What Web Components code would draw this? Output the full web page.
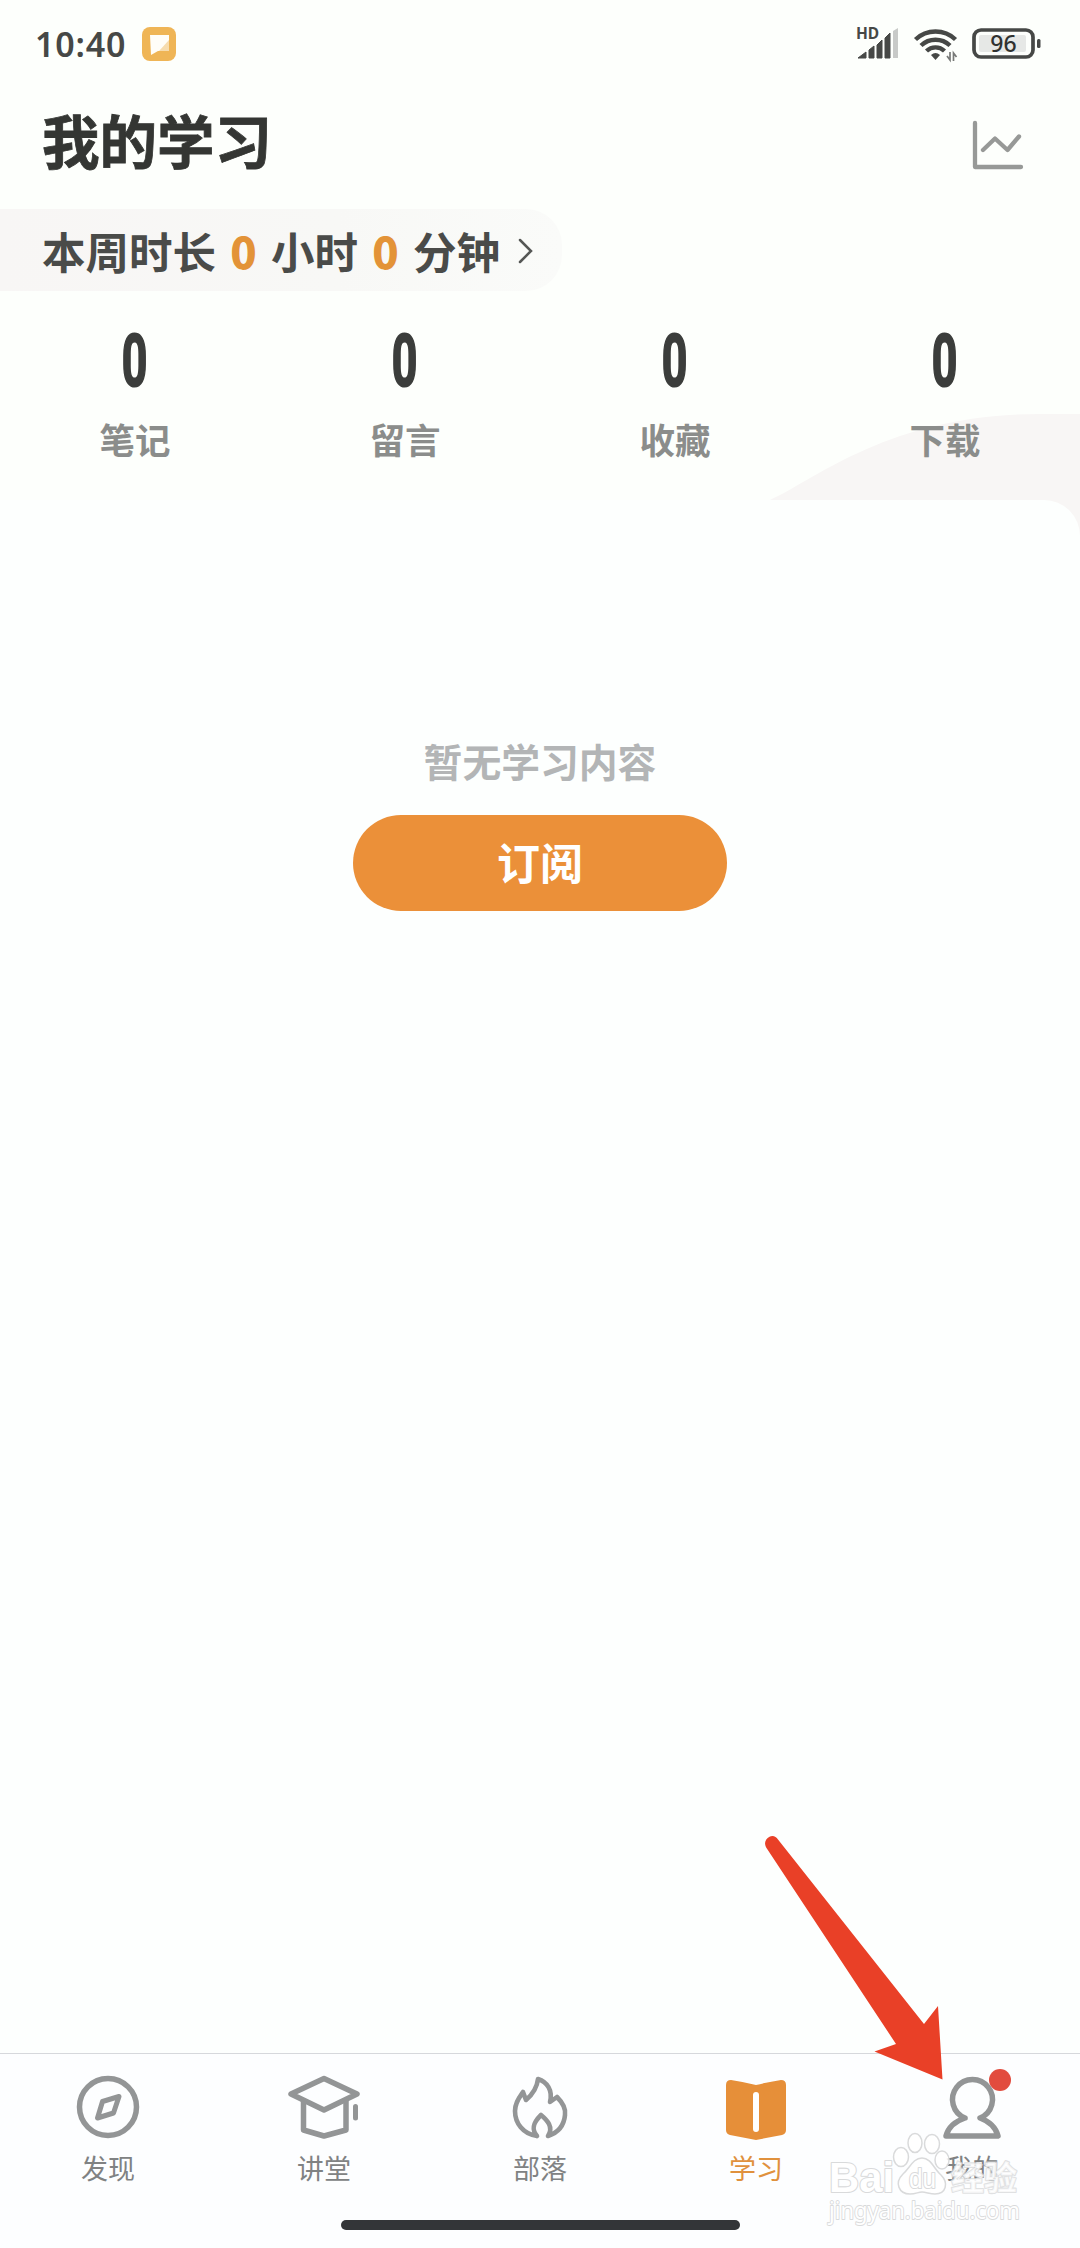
<!DOCTYPE html>
<html lang="zh-CN">
<head>
<meta charset="UTF-8">
<meta name="viewport" content="width=device-width, initial-scale=1.0">
<title>我的学习</title>
<style>
    body {
        margin: 0;
        background: #fdfffe;
        font-family: "Noto Sans CJK SC", sans-serif;
    }
</style>
</head>
<body>
<study-app></study-app>

<script>
class StatusBar extends HTMLElement {
    constructor() {
        super();
        this.shadowDOM = this.attachShadow({mode: 'open'});
        this.render();
    }

    render() {
        this.shadowDOM.innerHTML = `
        <style>
            :host {
                display: flex;
                align-items: center;
                justify-content: space-between;
                height: 88px;
                padding: 0 39px 0 35px;
                box-sizing: border-box;
                color: #464846;
            }
            svg {
                display: block;
                overflow: visible;
            }
            .left, .right {
                display: flex;
                align-items: center;
            }
            .left {
                gap: 16px;
            }
            .time {
                font: 600 34px/40px "Noto Sans", sans-serif;
                letter-spacing: .8px;
            }
            text {
                font-family: "Noto Sans", sans-serif;
            }
        </style>
        <div class="left">
            <span class="time">10:40</span>
            <svg width="34" height="34" viewBox="0 0 34 34">
                <rect width="34" height="34" rx="8" fill="#efb556"/>
                <path d="M8 8H27V24H16L9 28Z" fill="#fffdf8"/>
                <path d="M27 13L17 24H27Z" fill="#f7dcae"/>
            </svg>
        </div>
        <div class="right">
            <svg width="186" height="40" viewBox="0 0 186 40">
                <text x="1" y="15" font-size="15.5" font-weight="700" fill="#464846">HD</text>
                <path d="M3 34L11 28V34ZM14 26L19 22V34H14ZM22 21L27 16V34H22ZM30 14L35 9V34H30Z" fill="#464846" stroke="#464846" stroke-linejoin="round"/>
                <path d="M38 7L43 4V34H38Z" fill="#c8cac8"/>
                <g fill="none" stroke="#464846" stroke-width="4.4">
                    <path d="M60.500 15.500A29 29 0 0 1 100.500 15.500"/>
                    <path d="M66 21.500A21 21 0 0 1 95 21.500"/>
                    <path d="M71.500 27A13 13 0 0 1 89.500 27"/>
                </g>
                <path d="M76 31Q80.500 27 85 31L80.500 36Z" fill="#464846"/>
                <path d="M95 28V36L92 32M98.500 37V29L101.500 33" fill="none" stroke="#777977" stroke-width="1.700"/>
                <rect x="119" y="6" width="59" height="27" rx="7" fill="none" stroke="#464846" stroke-width="3.700"/>
                <rect x="124" y="11" width="47" height="17" rx="2" fill="#e6e8e6"/>
                <rect x="182" y="15" width="3.500" height="9" rx="1.500" fill="#464846"/>
                <text x="148.500" y="28" font-size="23" font-weight="500" text-anchor="middle" fill="#303230">96</text>
            </svg>
        </div>
        `;
    }
}

class PageHeader extends HTMLElement {
    constructor() {
        super();
        this.shadowDOM = this.attachShadow({mode: 'open'});
        this.render();
    }

    render() {
        this.shadowDOM.innerHTML = `
        <style>
            :host {
                display: flex;
                align-items: center;
                justify-content: space-between;
                height: 109px;
                padding: 0 56px 0 42px;
            }
            .title {
                margin-top: -8px;
                font-size: 57.500px;
                font-weight: 700;
                line-height: 84px;
                color: #343633;
                -webkit-text-stroke: .8px #343633;
            }
            svg {
                display: block;
                margin-top: 4px;
            }
        </style>
        <span class="title"><slot></slot></span>
        <svg width="52" height="50" viewBox="0 0 52 50" fill="none" stroke="#979997" stroke-width="4.300" stroke-linecap="round" stroke-linejoin="round">
            <path d="M3 3V47H49"/>
            <path d="M11 30L23 18.500L35.500 30L47 16.500"/>
        </svg>
        `;
    }
}

class WeekTime extends HTMLElement {
    constructor() {
        super();
        this.shadowDOM = this.attachShadow({mode: 'open'});
        this.render();
    }

    render() {
        this.shadowDOM.innerHTML = `
        <style>
            :host {
                display: flex;
                align-items: center;
                width: 562px;
                height: 82px;
                margin-top: 12px;
                padding: 2px 0 0 42px;
                box-sizing: border-box;
                border-radius: 0 36px 36px 0;
                background: linear-gradient(90deg, #f8f6f5, #f8f8f6 60%, #fafbf9);
                color: #4a4b49;
                font-size: 43.500px;
                font-weight: 700;
                line-height: 60px;
                white-space: nowrap;
            }
            b {
                display: inline-block;
                width: 55px;
                text-align: center;
                color: #e39338;
            }
            svg {
                margin: 0 0 0 18px;
            }
        </style>
        <span>本周时长<b>${this.getAttribute('hours')}</b>小时<b>${this.getAttribute('minutes')}</b>分钟</span>
        <svg width="16" height="26" viewBox="0 0 16 26" fill="none" stroke="#555755" stroke-width="2.500" stroke-linecap="round">
            <path d="M2 2L13 13L2 24"/>
        </svg>
        `;
    }
}

class StatItem extends HTMLElement {
    constructor() {
        super();
        this.shadowDOM = this.attachShadow({mode: 'open'});
        this.render();
    }

    render() {
        this.shadowDOM.innerHTML = `
        <style>
            :host {
                display: flex;
                flex-direction: column;
                align-items: center;
            }
            .count {
                font: 700 72px/74px Roboto, sans-serif;
                color: #3b3d3b;
                -webkit-text-stroke: 2px #3b3d3b;
                transform: translateY(1px) scaleX(.62);
            }
            .label {
                margin-top: 15px;
                font-size: 35.500px;
                font-weight: 700;
                line-height: 52px;
                color: #8b8d8b;
            }
        </style>
        <span class="count">${this.getAttribute('count')}</span>
        <span class="label"><slot></slot></span>
        `;
    }
}

class EmptyCard extends HTMLElement {
    constructor() {
        super();
        this.shadowDOM = this.attachShadow({mode: 'open'});
        this.render();
    }

    render() {
        this.shadowDOM.innerHTML = `
        <style>
            :host {
                display: flex;
                flex-direction: column;
                align-items: center;
                padding-top: 232px;
                box-sizing: border-box;
                border-radius: 36px 36px 0 0;
                background: #fdfffe;
            }
            .message {
                font-size: 38.800px;
                font-weight: 700;
                line-height: 56px;
                color: #b3b5b6;
            }
            button {
                width: 374px;
                height: 96px;
                margin-top: 27px;
                padding: 0 0 4px;
                border: 0;
                border-radius: 48px;
                background: #eb9039;
                color: #fff;
                font: inherit;
                font-size: 43px;
                font-weight: 700;
                line-height: 60px;
            }
        </style>
        <span class="message"><slot></slot></span>
        <button>${this.getAttribute('action')}</button>
        `;
    }
}

const tabIcons = {
    discover: `
        <circle cx="36" cy="35" r="28.500"/>
        <path d="M30.500 29.500L47 24.500L41.500 41L25.500 46Z" stroke-width="5"/>`,
    lecture: `
        <path d="M3 22L36 6.500L69 22L36 38Z"/>
        <path d="M15.500 29V58L36 64L58 58V29"/>
        <path d="M67.500 34.500V46" stroke-width="5"/>`,
    tribe: `
        <path d="M33 64C19 62 11 51 11 39C11 31 15 26 19 20L22 28C29 22 33 16 34 7C43 10 49 18 46 30L53 25C59 31 62 37 61 43C60 54 53 61 44 64C50 55 43 48 37 43C31 49 26 56 33 64" stroke-width="4.600"/>`,
    study: `
        <path d="M11 8Q24 10 36 13Q48 10 61 8Q66 8 66 13V58Q66 62 62 63L36 68L10 63Q6 62 6 58V13Q6 8 11 8Z" fill="currentColor" stroke="none"/>
        <path d="M36 23V57" stroke="#fff" stroke-width="6"/>`,
    mine: `
        <path d="M28 45A20 20 0 1 1 45 45C56 50 60 56 62 64H10C12 56 17 50 28 45" stroke="none"/>
        <path d="M29 46A20 20 0 1 1 44 46C55 50 60 56 62 64H10C12 56 17 50 29 46" stroke-width="5.500"/>`
};

class TabItem extends HTMLElement {
    constructor() {
        super();
        this.shadowDOM = this.attachShadow({mode: 'open'});
        this.render();
    }

    render() {
        this.shadowDOM.innerHTML = `
        <style>
            :host {
                display: flex;
                flex-direction: column;
                align-items: center;
                padding-top: 18px;
                color: #939596;
            }
            :host([active]) {
                color: #e68f39;
            }
            .icon {
                position: relative;
                height: 72px;
            }
            svg {
                display: block;
            }
            .label {
                margin-top: 4px;
                font-size: 27px;
                line-height: 40px;
                color: #808283;
            }
            :host([active]) .label {
                color: #e0913d;
            }
            .badge {
                display: none;
            }
            :host([badge]) .badge {
                display: block;
                position: absolute;
                top: -3px;
                right: -3px;
                width: 22px;
                height: 22px;
                border-radius: 50%;
                background: #e24c3e;
            }
        </style>
        <div class="icon">
            <svg width="72" height="72" viewBox="0 0 72 72" fill="none" stroke="currentColor" stroke-width="5.500" stroke-linecap="round" stroke-linejoin="round">
                ${tabIcons[this.getAttribute('icon')]}
            </svg>
            <i class="badge"></i>
        </div>
        <span class="label"><slot></slot></span>
        `;
    }
}

class TabBar extends HTMLElement {
    constructor() {
        super();
        this.shadowDOM = this.attachShadow({mode: 'open'});
        this.render();
    }

    render() {
        this.shadowDOM.innerHTML = `
        <style>
            :host {
                display: flex;
                flex-direction: column;
                align-items: center;
                height: 195px;
                box-sizing: border-box;
                border-top: 1.500px solid #d6d8dc;
                background: #fdfeff;
            }
            .tabs {
                display: grid;
                grid-template-columns: repeat(5, 1fr);
                width: 100%;
                height: 166px;
            }
            .home {
                width: 399px;
                height: 10px;
                border-radius: 5px;
                background: #333538;
            }
        </style>
        <div class="tabs"><slot></slot></div>
        <div class="home"></div>
        `;
    }
}

class PointerArrow extends HTMLElement {
    constructor() {
        super();
        this.shadowDOM = this.attachShadow({mode: 'open'});
        this.shadowDOM.innerHTML = `
        <style>
            :host {
                display: block;
                pointer-events: none;
            }
            svg {
                display: block;
                overflow: visible;
            }
        </style>
        <svg width="184" height="250" viewBox="0 0 184 250">
            <path d="M6.500 17C3.500 12 5.500 8 9.500 5.700C13 4 16 5.500 18 8.500L164 193L178 175L182.500 248.500L114.500 220.500L136 213Z" transform="translate(0 -1)" fill="#e94027"/>
        </svg>
        `;
    }
}

class WaterMark extends HTMLElement {
    constructor() {
        super();
        this.shadowDOM = this.attachShadow({mode: 'open'});
        this.shadowDOM.innerHTML = `
        <style>
            :host {
                display: block;
                pointer-events: none;
            }
            svg {
                display: block;
                overflow: visible;
            }
            text {
                paint-order: stroke;
                font-family: "Liberation Sans", sans-serif;
            }
            .cjk {
                font-family: "Noto Sans CJK SC", sans-serif;
            }
            .url {
                font-family: "Noto Sans", sans-serif;
            }
        </style>
        <svg width="200" height="110" viewBox="0 0 200 110" fill="#fff" stroke="#d9dadb" stroke-width="2.200" stroke-linejoin="round">
            <text x="5" y="62" font-size="43" font-weight="700" textLength="65" lengthAdjust="spacingAndGlyphs">Bai</text>
            <g stroke-width="1.500" fill-opacity=".85">
                <ellipse cx="77" cy="27" rx="7.500" ry="9.500"/>
                <ellipse cx="91" cy="13" rx="7" ry="9.500"/>
                <ellipse cx="108" cy="14" rx="7.500" ry="9.500"/>
                <ellipse cx="118" cy="30" rx="7" ry="9"/>
                <path d="M98 28C89 28 86 38 79 44C70 53 75 64 86 64C92 64 94 62 98 62C102 62 106 64 111 64C122 64 125 53 117 45C110 39 107 28 98 28Z"/>
            </g>
            <text x="85" y="58" font-size="27" font-weight="400" textLength="27" lengthAdjust="spacingAndGlyphs">du</text>
            <text class="cjk" x="127" y="60" font-size="33" font-weight="700" fill-opacity=".75" stroke-opacity=".8">经验</text>
            <text class="url" x="5" y="89" font-size="23.500" font-weight="400" textLength="191" lengthAdjust="spacingAndGlyphs" stroke-width="1.800">jingyan.baidu.com</text>
        </svg>
        `;
    }
}

class StudyApp extends HTMLElement {
    constructor() {
        super();
        this.shadowDOM = this.attachShadow({mode: 'open'});
        this.render();
    }

    render() {
        this.shadowDOM.innerHTML = `
        <style>
            :host {
                display: flex;
                flex-direction: column;
                position: relative;
                width: 1080px;
                height: 2248px;
                overflow: hidden;
            }
            .top {
                position: relative;
                height: 500px;
                background: #fdfffc;
            }
            .hill {
                position: absolute;
                right: 0;
                top: 412px;
            }
            .stats {
                display: grid;
                grid-template-columns: repeat(4, 1fr);
                position: relative;
                margin-top: 33px;
            }
            empty-card {
                position: relative;
                flex: 1;
            }
            pointer-arrow {
                position: absolute;
                left: 760px;
                top: 1832px;
            }
            water-mark {
                position: absolute;
                left: 824px;
                top: 2130px;
            }
        </style>
        <div class="top">
            <svg class="hill" width="310" height="130" viewBox="0 0 310 130">
                <path d="M0 88C45 68 120 2 270 2H310V130H260V88Z" fill="#f8f6f5"/>
            </svg>
            <status-bar></status-bar>
            <page-header>我的学习</page-header>
            <week-time hours="0" minutes="0"></week-time>
            <div class="stats">
                <stat-item count="0">笔记</stat-item>
                <stat-item count="0">留言</stat-item>
                <stat-item count="0">收藏</stat-item>
                <stat-item count="0">下载</stat-item>
            </div>
        </div>
        <empty-card action="订阅">暂无学习内容</empty-card>
        <tab-bar>
            <tab-item icon="discover">发现</tab-item>
            <tab-item icon="lecture">讲堂</tab-item>
            <tab-item icon="tribe">部落</tab-item>
            <tab-item icon="study" active>学习</tab-item>
            <tab-item icon="mine" badge>我的</tab-item>
        </tab-bar>
        <pointer-arrow></pointer-arrow>
        <water-mark></water-mark>
        `;
    }
}

customElements.define('status-bar', StatusBar);
customElements.define('page-header', PageHeader);
customElements.define('week-time', WeekTime);
customElements.define('stat-item', StatItem);
customElements.define('empty-card', EmptyCard);
customElements.define('tab-item', TabItem);
customElements.define('tab-bar', TabBar);
customElements.define('pointer-arrow', PointerArrow);
customElements.define('water-mark', WaterMark);
customElements.define('study-app', StudyApp);
</script>
</body>
</html>
